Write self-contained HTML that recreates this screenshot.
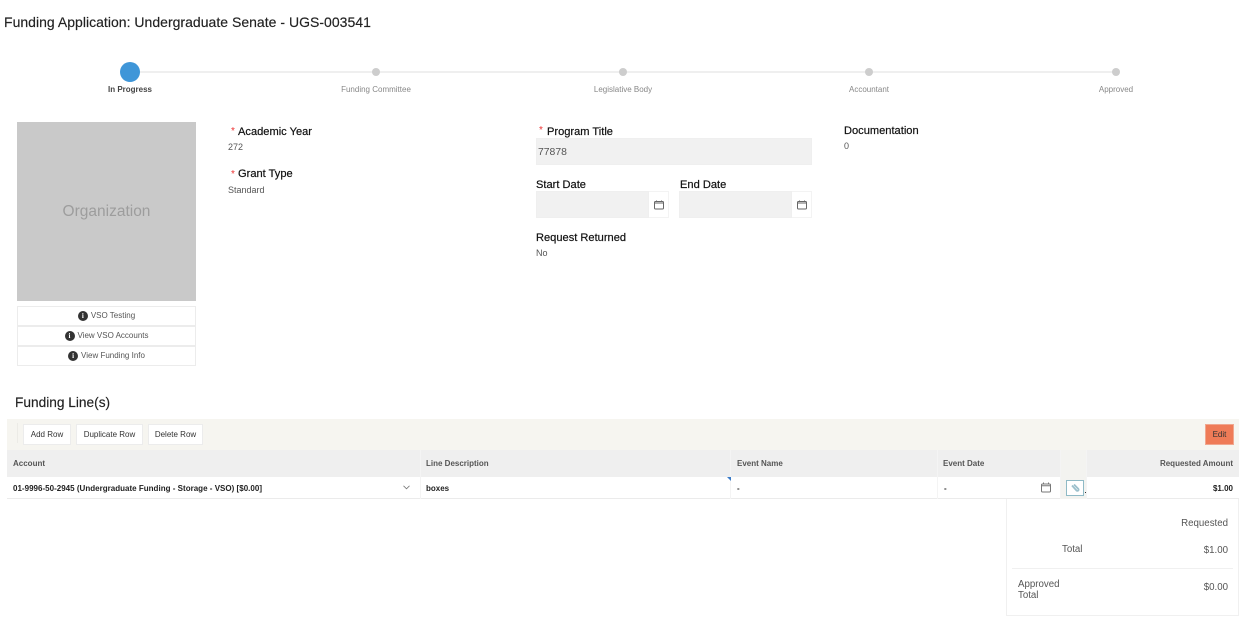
<!DOCTYPE html>
<html><head><meta charset="utf-8"><style>
html,body{margin:0;padding:0;background:#fff}
body{width:1252px;height:620px;overflow:hidden;position:relative;font-family:"Liberation Sans",sans-serif;color:#333}
#p{position:absolute;left:0;top:0;width:1252px;height:620px;filter:blur(.35px)}
.t{position:absolute;white-space:nowrap;line-height:14px}
.b{position:absolute;box-sizing:border-box}
.c{text-align:center;transform:translateX(-50%)}
.lab{font-size:11.1px;color:#111;-webkit-text-stroke:.2px #111}
.val{font-size:9px;color:#555}
.st{font-size:8px;color:#888;top:83px}
.dot{position:absolute;width:8px;height:8px;border-radius:50%;background:#cdcdcd;top:68px}
.req{color:#e33;font-size:10px}
.inp{background:#f1f1f1;border:1px solid #efefef}
.btn{position:absolute;box-sizing:border-box;background:#fff;border:1px solid #ececec;font-size:8px;color:#333;text-align:center}
.info{display:inline-block;width:10px;height:10px;border-radius:50%;background:#333;color:#fff;font:bold 7px/10px "Liberation Serif",serif;text-align:center;vertical-align:top;margin:4px 3px 0 0}
.lk{position:absolute;left:17px;width:179px;height:20px;box-sizing:border-box;border:1px solid #ececec;font-size:8px;line-height:18px;color:#555;text-align:center}
.th{font-size:8px;font-weight:bold;color:#555;top:457px}
.td{font-size:8px;font-weight:bold;color:#222;top:482px}
.sv{font-size:9.7px;color:#555}
</style></head><body><div id="p">
<div class="t" style="left:4px;top:15px;font-size:14px;color:#222;letter-spacing:.02px;-webkit-text-stroke:.15px #222">Funding Application: Undergraduate Senate - UGS-003541</div>

<div class="b" style="left:130px;top:71px;width:986px;height:2px;background:#efefef"></div>
<div class="b" style="left:120px;top:62px;width:20px;height:20px;border-radius:50%;background:#3f96d8"></div>
<div class="dot" style="left:372px"></div>
<div class="dot" style="left:619px"></div>
<div class="dot" style="left:865px"></div>
<div class="dot" style="left:1112px"></div>
<div class="t st c" style="left:130px;color:#444;font-weight:bold">In Progress</div>
<div class="t st c" style="left:376px">Funding Committee</div>
<div class="t st c" style="left:623px">Legislative Body</div>
<div class="t st c" style="left:869px">Accountant</div>
<div class="t st c" style="left:1116px">Approved</div>

<div class="b" style="left:17px;top:122px;width:179px;height:179px;background:#c9c9c9"></div>
<div class="t" style="left:17px;width:179px;top:205px;text-align:center;font-size:15.5px;color:#9d9d9d">Organization</div>
<div class="lk" style="top:306px"><span class="info">i</span>VSO Testing</div>
<div class="lk" style="top:326px"><span class="info">i</span>View VSO Accounts</div>
<div class="lk" style="top:346px"><span class="info">i</span>View Funding Info</div>

<div class="t req" style="left:231px;top:125px">*</div>
<div class="t lab" style="left:238px;top:125px">Academic Year</div>
<div class="t val" style="left:228px;top:140px">272</div>
<div class="t req" style="left:231px;top:168px">*</div>
<div class="t lab" style="left:238px;top:167px">Grant Type</div>
<div class="t val" style="left:228px;top:183px">Standard</div>

<div class="t req" style="left:539px;top:124px">*</div>
<div class="t lab" style="left:547px;top:125px">Program Title</div>
<div class="b inp" style="left:536px;top:138px;width:276px;height:27px"></div>
<div class="t" style="left:538px;top:146px;font-size:10.4px;color:#555">77878</div>

<div class="t lab" style="left:536px;top:178px">Start Date</div>
<div class="b inp" style="left:536px;top:191px;width:113px;height:27px"></div>
<div class="b" style="left:649px;top:191px;width:20px;height:27px;border:1px solid #f3f3f3;border-left:0"></div>
<svg class="b" style="left:654px;top:200px" width="10" height="10" viewBox="0 0 10 10" fill="none" stroke="#666" stroke-width="1"><rect x=".5" y="1.5" width="9" height="7.5" rx="1"/><path d="M.5 3h9M2.5 .5v1.5M7.5 .5v1.5"/></svg>
<div class="t lab" style="left:680px;top:178px">End Date</div>
<div class="b inp" style="left:679px;top:191px;width:113px;height:27px"></div>
<div class="b" style="left:792px;top:191px;width:20px;height:27px;border:1px solid #f3f3f3;border-left:0"></div>
<svg class="b" style="left:797px;top:200px" width="10" height="10" viewBox="0 0 10 10" fill="none" stroke="#666" stroke-width="1"><rect x=".5" y="1.5" width="9" height="7.5" rx="1"/><path d="M.5 3h9M2.5 .5v1.5M7.5 .5v1.5"/></svg>
<div class="t lab" style="left:536px;top:231px">Request Returned</div>
<div class="t val" style="left:536px;top:246px">No</div>

<div class="t lab" style="left:844px;top:124px">Documentation</div>
<div class="t val" style="left:844px;top:139px">0</div>

<div class="t" style="left:15px;top:396px;font-size:13.7px;color:#222;-webkit-text-stroke:.15px #222">Funding Line(s)</div>

<div class="b" style="left:7px;top:419px;width:1232px;height:31px;background:#f6f5f0"></div>
<div class="b" style="left:17px;top:423px;width:1px;height:20px;background:#ecebe6"></div>
<div class="btn" style="left:23px;top:424px;width:48px;height:21px;line-height:19px">Add Row</div>
<div class="btn" style="left:76px;top:424px;width:67px;height:21px;line-height:19px">Duplicate Row</div>
<div class="btn" style="left:148px;top:424px;width:55px;height:21px;line-height:19px">Delete Row</div>
<div class="btn" style="left:1205px;top:424px;width:29px;height:21px;line-height:19px;background:#ef7b57;border-color:#f0a78f;color:#333">Edit</div>

<div class="b" style="left:7px;top:450px;width:1232px;height:27px;background:#efefef"></div>
<div class="b" style="left:7px;top:477px;width:1232px;height:22px;background:#fff;border-bottom:1px solid #ebebeb"></div>
<div class="b" style="left:420px;top:450px;width:1px;height:49px;background:#f4f4f4"></div>
<div class="b" style="left:730px;top:450px;width:1px;height:49px;background:#f4f4f4"></div>
<div class="b" style="left:937px;top:450px;width:1px;height:49px;background:#f4f4f4"></div>
<div class="b" style="left:1060px;top:450px;width:27px;height:49px;background:#f3f3f0;border-left:1px solid #f4f4f4;border-right:1px solid #f4f4f4"></div>

<div class="t th" style="left:13px">Account</div>
<div class="t th" style="left:426px">Line Description</div>
<div class="t th" style="left:737px">Event Name</div>
<div class="t th" style="left:943px">Event Date</div>
<div class="t th" style="right:19px">Requested Amount</div>

<div class="t td" style="left:13px;letter-spacing:.015px">01-9996-50-2945 (Undergraduate Funding - Storage - VSO) [$0.00]</div>
<svg class="b" style="left:403px;top:485px" width="7" height="5" viewBox="0 0 7 5" fill="none" stroke="#777" stroke-width=".8"><path d="M.5 .8L3.5 3.8L6.5 .8"/></svg>
<div class="t td" style="left:426px">boxes</div>
<svg class="b" style="left:727px;top:477px" width="4" height="4"><path d="M0 0h4v4z" fill="#3a7bc8"/></svg>
<div class="t td" style="left:737px">-</div>
<div class="t td" style="left:944px">-</div>
<svg class="b" style="left:1041px;top:482px" width="10" height="11" viewBox="0 0 10 11" fill="none" stroke="#777" stroke-width="1"><rect x=".5" y="2" width="9" height="8" rx="1"/><path d="M.5 3.7h9M2.5 .5v2M7.5 .5v2"/></svg>
<div class="b" style="left:1066px;top:480px;width:18px;height:16px;background:#fff;border:1px solid #8fbac6"></div>
<svg class="b" style="left:1070px;top:483px" width="10" height="10" viewBox="0 0 10 10" fill="none" stroke="#9cc0cc" stroke-width="1.8"><path d="M2 2.5L6.5 7.5a1.2 1.2 0 0 0 1.8-1.6L4 1.5"/></svg>
<div class="b" style="left:1085px;top:492px;width:1px;height:1px;background:#333"></div>
<div class="t td" style="right:19px">$1.00</div>

<div class="b" style="left:1006px;top:499px;width:233px;height:117px;border:1px solid #f0f0f0;border-top:0"></div>
<div class="t sv" style="right:24px;top:517px">Requested</div>
<div class="t sv" style="left:1062px;top:543px">Total</div>
<div class="t sv" style="right:24px;top:544px">$1.00</div>
<div class="b" style="left:1012px;top:568px;width:221px;height:1px;background:#f0f0f0"></div>
<div class="t sv" style="left:1018px;top:580px;line-height:10.5px;white-space:normal;width:50px">Approved Total</div>
<div class="t sv" style="right:24px;top:581px">$0.00</div>
</div></body></html>
